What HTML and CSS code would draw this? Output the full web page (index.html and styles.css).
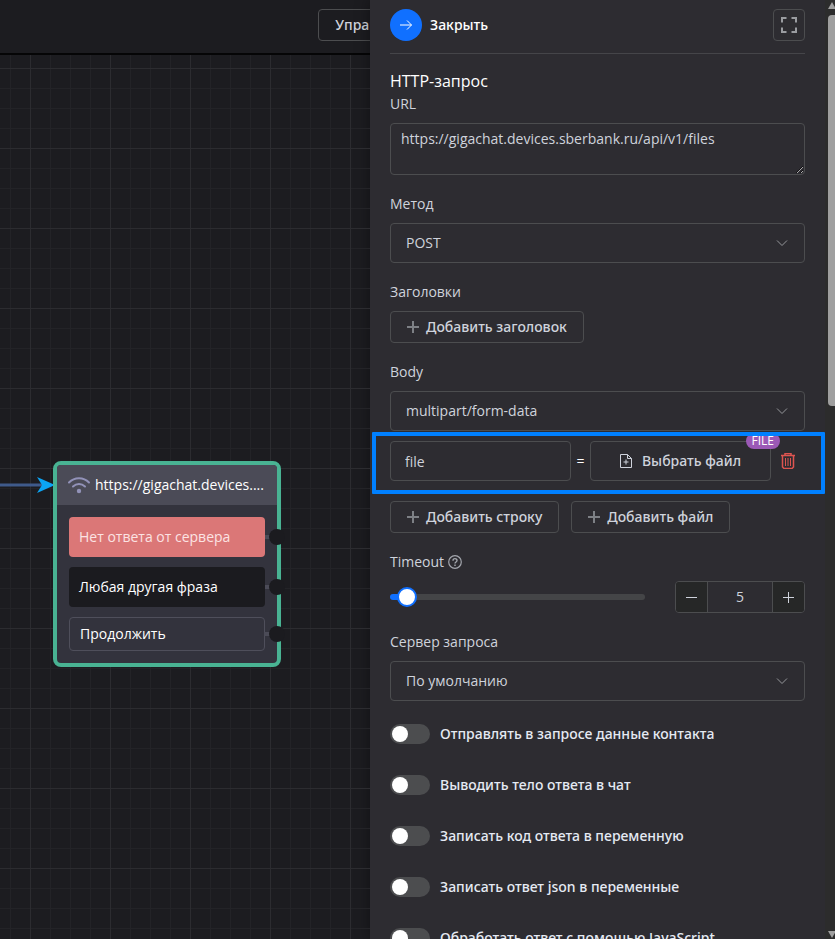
FILE: index.html
```html
<!DOCTYPE html>
<html lang="ru">
<head>
<meta charset="utf-8">
<meta name="viewport" content="width=device-width, initial-scale=1">
<title>HTTP-запрос</title>
<link rel="stylesheet" href="styles.css">
</head>
<body>
<div class="app">
  <main class="workspace">
    <header class="topbar">
      <button class="btn topbar-btn" type="button">Управление</button>
    </header>
    <div class="canvas">
      <svg class="edge" width="56" height="20" viewBox="0 0 56 20" aria-hidden="true">
        <path d="M0 10H42" stroke="#3f5a8a" stroke-width="3"/>
        <path d="M37 2L55 10L37 18L42 10Z" fill="#0ba5f5"/>
      </svg>
      <article class="node">
        <div class="node-head">
          <svg width="24" height="18" viewBox="0 0 24 18" fill="none" stroke="#9292b8" stroke-width="2" stroke-linecap="round" aria-hidden="true">
            <path d="M2 6.500C7.500 .8 16.500 .8 22 6.500M6 10.500C9.500 7.200 14.500 7.200 18 10.500"/>
            <circle cx="12" cy="15" r="2.200" fill="#9292b8" stroke="none"/>
          </svg>
          <span class="node-title">https://gigachat.devices....</span>
        </div>
        <div class="node-body">
          <div class="node-item error">Нет ответа от сервера</div>
          <div class="node-item dark">Любая другая фраза</div>
          <div class="node-item outline">Продолжить</div>
        </div>
      </article>
    </div>
  </main>

  <aside class="panel">
    <form class="form">
      <div class="panel-head">
        <button class="close" type="button">
          <span class="close-icon">
            <svg width="16" height="16" viewBox="0 0 16 16" fill="none" stroke="#fff" aria-hidden="true"><path d="M2 8H13.500M9 3.500L13.500 8L9 12.500"/></svg>
          </span>
          Закрыть
        </button>
        <button class="btn expand" type="button" aria-label="Развернуть">
          <svg width="16" height="16" viewBox="0 0 16 16" fill="none" stroke="#9a9ca1" stroke-width="2" aria-hidden="true"><path d="M1 5.500V1H5.500M10.500 1H15V5.500M15 10.500V15H10.500M5.500 15H1V10.500"/></svg>
        </button>
      </div>

      <h1 class="title">HTTP-запрос</h1>

      <div class="field">
        <label class="label" for="url">URL</label>
        <textarea class="control url" id="url">https://gigachat.devices.sberbank.ru/api/v1/files</textarea>
      </div>

      <div class="field">
        <label class="label" for="method">Метод</label>
        <div class="select">
          <select class="control" id="method"><option>POST</option></select>
          <svg class="chevron" width="12" height="8" viewBox="0 0 12 8" fill="none" stroke="#95979b" aria-hidden="true"><path d="M1 1.500L6 6.500L11 1.500"/></svg>
        </div>
      </div>

      <div class="field">
        <span class="label">Заголовки</span>
        <div class="actions">
          <button class="btn" type="button"><svg class="plus" width="12" height="12" viewBox="0 0 12 12" aria-hidden="true"><path d="M6 0V12M0 6H12"/></svg>Добавить заголовок</button>
        </div>
      </div>

      <div class="field">
        <label class="label" for="body">Body</label>
        <div class="select">
          <select class="control" id="body"><option>multipart/form-data</option></select>
          <svg class="chevron" width="12" height="8" viewBox="0 0 12 8" fill="none" stroke="#95979b" aria-hidden="true"><path d="M1 1.500L6 6.500L11 1.500"/></svg>
        </div>
        <div class="file-row">
          <input class="control key" type="text" value="file" aria-label="Имя поля">
          <span class="equals">=</span>
          <button class="btn choose" type="button">
            <svg width="12" height="14" viewBox="0 0 12 14" fill="none" stroke="#cfd3dc" aria-hidden="true"><path d="M.5 .5H7.500L11.500 4.500V13.500H.5ZM7.500 .5V4.500H11.500M6 5.500V10.500M3.500 8H8.500"/></svg>
            Выбрать файл
            <span class="badge">FILE</span>
          </button>
          <button class="remove" type="button" aria-label="Удалить">
            <svg width="14" height="16" viewBox="0 0 14 16" fill="none" stroke="#dd5450" aria-hidden="true"><path d="M0 2.500H14M4 2.500V.5H10V2.500M1.500 2.500V14L3 15.500H11L12.500 14V2.500" stroke-width="1.500"/><path d="M4.500 5V13M7 5V13M9.500 5V13"/></svg>
          </button>
          <span class="highlight"></span>
        </div>
        <div class="actions">
          <button class="btn" type="button"><svg class="plus" width="12" height="12" viewBox="0 0 12 12" aria-hidden="true"><path d="M6 0V12M0 6H12"/></svg>Добавить строку</button>
          <button class="btn" type="button"><svg class="plus" width="12" height="12" viewBox="0 0 12 12" aria-hidden="true"><path d="M6 0V12M0 6H12"/></svg>Добавить файл</button>
        </div>
      </div>

      <div class="field">
        <label class="label" for="timeout">Timeout
          <svg width="14" height="14" viewBox="0 0 14 14" fill="none" stroke="#a3a6ad" aria-hidden="true"><circle cx="7" cy="7" r="6.300" stroke-width="1.200"/><path d="M5 5.700C5 3 9 3 9 5.500C9 7 7 6.900 7 8.500M7 9.600V10.900" stroke-width="1.400"/></svg>
        </label>
        <div class="timeout">
          <div class="slider">
            <input type="range" min="1" max="60" value="5" aria-label="Timeout">
          </div>
          <div class="stepper">
            <button type="button" aria-label="Меньше"><svg width="12" height="12" viewBox="0 0 12 12" stroke="#cfd3dc" aria-hidden="true"><path d="M0 6.500H11"/></svg></button>
            <input type="text" id="timeout" value="5">
            <button type="button" aria-label="Больше"><svg width="12" height="12" viewBox="0 0 12 12" stroke="#cfd3dc" aria-hidden="true"><path d="M0 6.500H11M5.500 1V12"/></svg></button>
          </div>
        </div>
      </div>

      <div class="field">
        <label class="label" for="server">Сервер запроса</label>
        <div class="select">
          <select class="control" id="server"><option>По умолчанию</option></select>
          <svg class="chevron" width="12" height="8" viewBox="0 0 12 8" fill="none" stroke="#95979b" aria-hidden="true"><path d="M1 1.500L6 6.500L11 1.500"/></svg>
        </div>
      </div>

      <div class="switches">
        <label class="switch"><input type="checkbox">Отправлять в запросе данные контакта</label>
        <label class="switch"><input type="checkbox">Выводить тело ответа в чат</label>
        <label class="switch"><input type="checkbox">Записать код ответа в переменную</label>
        <label class="switch"><input type="checkbox">Записать ответ json в переменные</label>
        <label class="switch"><input type="checkbox">Обработать ответ с помощью JavaScript</label>
      </div>
    </form>
    <div class="scrollbar" aria-hidden="true">
      <svg width="8" height="7" viewBox="0 0 8 7"><path d="M0 7L4 0L8 7Z" fill="#9f9f9f"/></svg>
      <span class="track"><span class="thumb"></span></span>
      <svg width="8" height="7" viewBox="0 0 8 7"><path d="M0 0L4 7L8 0Z" fill="#9f9f9f"/></svg>
    </div>
  </aside>
</div>
</body>
</html>
```
FILE: styles.css
```css
* { box-sizing: border-box; }

:root {
  --line: #4c4d4f;
  --text: #cfd3dc;
  --panel: #2d2c31;
  --canvas: #1c1c20;
  --blue: #1070ff;
  --medium: "Noto Sans", "Open Sans", sans-serif;
}

body {
  margin: 0;
  background: var(--canvas);
  color: var(--text);
  font: 14px/22px "Open Sans", "Noto Sans", sans-serif;
}

button, input, select, textarea {
  margin: 0;
  font: inherit;
  color: inherit;
}

svg { display: block; flex: none; }

.app {
  display: flex;
  height: 100vh;
  overflow: hidden;
}

/* Workspace */
.workspace {
  display: flex;
  flex: 1;
  flex-direction: column;
  min-width: 0;
  overflow: hidden;
}

.topbar {
  display: flex;
  justify-content: flex-end;
  height: 55px;
  padding-top: 9px;
  border-bottom: 2px solid #050506;
}

.topbar-btn { margin-right: -66px; }

.canvas {
  position: relative;
  flex: 1;
  background-image:
    linear-gradient(90deg, #2c2c30 1px, transparent 1px),
    linear-gradient(#2c2c30 1px, transparent 1px),
    linear-gradient(90deg, #232327 1px, transparent 1px),
    linear-gradient(#232327 1px, transparent 1px);
  background-size: 80px 80px, 80px 80px, 20px 20px, 20px 20px;
  background-position: 30px 13px;
}

.edge {
  position: absolute;
  top: 420px;
  left: 0;
}

.node {
  position: absolute;
  top: 406px;
  left: 53px;
  width: 228px;
  border: 4px solid #49b393;
  border-radius: 8px;
  background: #33333d;
  color: #fff;
}

.node-head {
  display: flex;
  align-items: center;
  gap: 4px;
  height: 40px;
  padding-left: 10px;
  border-radius: 4px 4px 0 0;
  background: #4b4b57;
}

.node-title { white-space: nowrap; }

.node-body {
  display: grid;
  gap: 10px;
  padding: 12px;
}

.node-item {
  position: relative;
  padding: 9px 10px;
  border-radius: 4px;
}

.node-item.error { background: #db7777; color: #fbe3e3; }
.node-item.dark { background: #1b1b1f; }
.node-item.outline { padding: 5px 10px; border: 1px solid #4f4f5b; }

.node-item::before {
  content: "";
  position: absolute;
  top: calc(50% - 2px);
  left: 100%;
  width: 6px;
  height: 4px;
  background: #4b4b57;
}

.node-item::after {
  content: "";
  position: absolute;
  top: calc(50% - 8px);
  right: -20px;
  width: 16px;
  height: 16px;
  border-radius: 50%;
  background: #1b1b1f;
}

.node-item.outline::after { right: -21px; }
.node-item.error, .node-item.dark { height: 40px; }

/* Panel */
.panel {
  display: flex;
  flex: none;
  width: 465px;
  background: var(--panel);
  box-shadow: 0 0 14px rgba(0, 0, 0, .4);
}

.form {
  flex: 1;
  min-width: 0;
  padding: 9px 20px 0;
  overflow: hidden;
}

.panel-head {
  display: flex;
  justify-content: space-between;
  padding-bottom: 12px;
  border-bottom: 1px solid #454549;
}

.close {
  display: flex;
  align-items: center;
  gap: 8px;
  padding: 0;
  border: 0;
  background: none;
  color: #fff;
  font-family: var(--medium);
  font-weight: 500;
}

.close-icon {
  display: grid;
  place-items: center;
  width: 32px;
  height: 32px;
  border-radius: 50%;
  background: var(--blue);
}

.btn {
  display: inline-flex;
  align-items: center;
  justify-content: center;
  gap: 7px;
  height: 32px;
  padding: 0 16px;
  border: 1px solid var(--line);
  border-radius: 4px;
  background: none;
  font-family: var(--medium);
  font-weight: 500;
  white-space: nowrap;
}

.expand { width: 32px; padding: 0; }

.plus {
  fill: none;
  stroke: #7d8085;
  stroke-width: 2;
}

.title {
  margin: 15px 0 0;
  color: #fff;
  font-size: 16px;
  font-weight: 500;
  line-height: 24px;
}

.field { margin-bottom: 18px; }

.label {
  display: flex;
  align-items: center;
  gap: 4px;
  margin-bottom: 8px;
}

.control {
  display: block;
  width: 100%;
  height: 40px;
  padding: 0 15px;
  border: 1px solid var(--line);
  border-radius: 4px;
  outline: 0;
  background: none;
  appearance: none;
}

.url {
  height: 52px;
  padding: 4px 10px;
  resize: vertical;
}

.select { position: relative; }

.chevron {
  position: absolute;
  top: 16px;
  right: 17px;
  pointer-events: none;
}

.actions { display: flex; gap: 12px; }

.file-row {
  position: relative;
  display: grid;
  grid-template-columns: 1fr 19px 1fr 34px;
  align-items: center;
  margin: 10px 0 20px;
}

.key { padding: 0 14px; }
.equals { color: #fff; text-align: center; }

.choose {
  position: relative;
  gap: 10px;
  height: 40px;
}

.badge {
  position: absolute;
  top: -9px;
  right: -10px;
  padding: 0 6px;
  border-radius: 8px;
  background: #9b59b6;
  color: #fff;
  font-family: "Open Sans", "Noto Sans", sans-serif;
  font-size: 12px;
  line-height: 16px;
}

.remove {
  justify-self: center;
  padding: 0;
  border: 0;
  background: none;
}

.highlight {
  position: absolute;
  inset: -9px -20px -13px -18px;
  border: 4px solid #0080ff;
  border-radius: 1px;
  pointer-events: none;
}

.timeout {
  display: flex;
  align-items: center;
  gap: 30px;
}

.slider {
  display: flex;
  flex: 1;
  align-items: center;
  height: 6px;
  border-radius: 3px;
  background: linear-gradient(90deg, var(--blue) 7%, #444547 7%);
}

.slider input {
  flex: 1;
  min-width: 0;
  height: 20px;
  margin: 0 -10px;
  background: none;
  appearance: none;
}

.slider input::-webkit-slider-thumb {
  width: 20px;
  height: 20px;
  border: 2px solid var(--blue);
  border-radius: 50%;
  background: #fff;
  appearance: none;
}

.stepper {
  display: grid;
  grid-template-columns: 31px 1fr 31px;
  width: 130px;
  height: 32px;
  border: 1px solid var(--line);
  border-radius: 4px;
  overflow: hidden;
}

.stepper button {
  display: grid;
  place-items: center;
  padding: 0;
  border: 0;
  background: #262727;
}

.stepper input {
  min-width: 0;
  padding: 0;
  border: solid var(--line);
  border-width: 0 1px;
  outline: 0;
  background: none;
  text-align: center;
}

.switches {
  display: grid;
  gap: 31px;
  margin-top: 23px;
}

.switch {
  display: flex;
  align-items: center;
  gap: 10px;
  height: 20px;
  color: #e5eaf3;
  font-family: var(--medium);
  font-weight: 500;
}

.switch input {
  display: flex;
  align-items: center;
  width: 40px;
  height: 20px;
  padding: 2px;
  border-radius: 10px;
  background: #4c4d4f;
  appearance: none;
}

.switch input::before {
  content: "";
  width: 16px;
  height: 16px;
  border-radius: 50%;
  background: #fff;
}

.switch input:checked { background: var(--blue); justify-content: flex-end; }

.scrollbar {
  display: flex;
  flex-direction: column;
  align-items: flex-end;
  gap: 6px;
  width: 10px;
  padding: 2px 0 1px;
  background: #2c2c2c;
}

.scrollbar svg { margin-right: -1px; }

.track { flex: 1; width: 7px; }

.thumb {
  display: block;
  height: 43%;
  border-radius: 4px 0 0 4px;
  background: #9f9f9f;
}
```
